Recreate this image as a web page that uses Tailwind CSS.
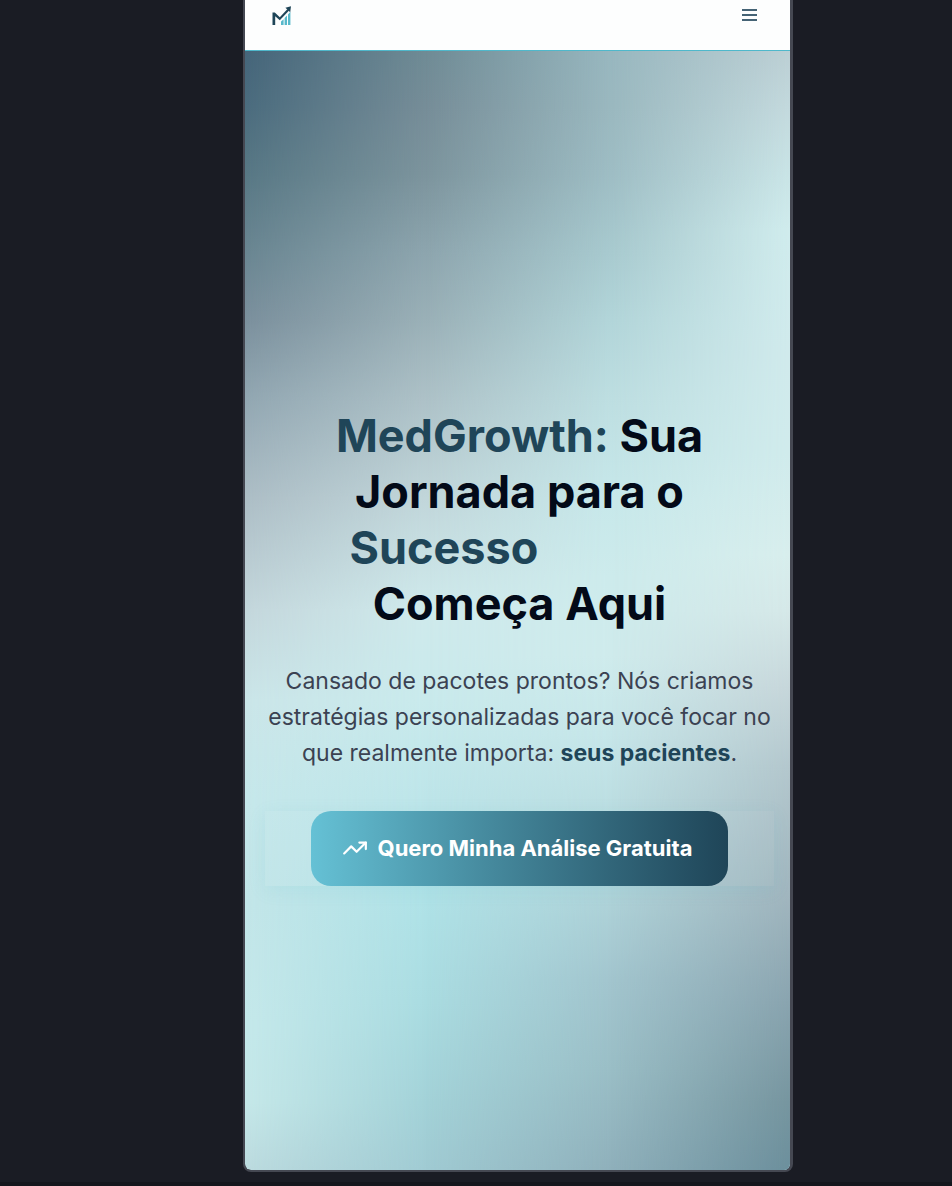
<!DOCTYPE html>
<html lang="pt-BR">
<head>
<meta charset="utf-8">
<meta name="viewport" content="width=device-width, initial-scale=1">
<title>MedGrowth</title>
<script src="https://cdn.jsdelivr.net/npm/@tailwindcss/browser@4"></script>
</head>
<body class="flex min-h-screen flex-col border-b-4 border-[#14161d] bg-[#1a1c24] pb-[10px] font-['Inter',sans-serif] sm:pl-[84px]">
  <div class="mx-auto flex w-full max-w-[550px] grow flex-col overflow-hidden rounded-b-lg border-r-3 border-b-2 border-l-2 border-[#454852] bg-[#454852]">
    <header class="flex h-[51px] items-start justify-between border-b border-[#4fb8cb] bg-[#fdfefe] pr-8 pl-[26px]">
      <a href="#" aria-label="MedGrowth" class="mt-[5px] block">
        <svg class="size-[22px]" viewBox="0 0 22 22" fill="none" aria-hidden="true">
          <path d="M10 20v-3.500l2.600-2.300V20zM13.600 20v-7l2.400-2.400V20zM17 20V9.500l2.400-2.800V20z" fill="#58b9cb"/>
          <path d="M1.500 20V7.500h2.300l5 4.800L16.500 4l1.600 1.600L8.800 15.300 4.200 11.200V20z" fill="#1f4558"/>
          <path d="M14.400 2.800l5.600-1.600L19.200 7.200z" fill="#1f4558"/>
        </svg>
      </a>
      <button type="button" aria-label="Abrir menu" class="mt-[5px] text-[#456375]">
        <svg class="h-5 w-[17px]" viewBox="0 0 17 20" fill="none" stroke="currentColor" stroke-width="2" aria-hidden="true"><path d="M1 5h15M1 10h15M1 15h15"/></svg>
      </button>
    </header>
    <main class="relative isolate flex grow flex-col items-center justify-center pt-[72px] pr-4 pl-5 text-center">
      <!-- Mesh gradient: four vertical ramps blended from left to right -->
      <div class="absolute inset-0 -z-10 overflow-hidden rounded-b-md bg-[linear-gradient(#45657a,#4b6c7e_5%,#587885_11%,#6a8692_18%,#7b909d_24%,#92a7b2_31%,#adbec6_40%,#c4d7dc_50%,#cbe6e9_58%,#c6e8eb_67%,#c3e6e9_76%,#c5e9eb_87%,#c5e8e9_94%,#bcdbdf)]" aria-hidden="true">
        <div class="absolute inset-0 bg-[linear-gradient(#6f8b95,#768d98_5%,#7c949d_11%,#8da5ae_18%,#9ab0b7_24%,#adc1c7_31%,#c1d6da_40%,#cfeaec_50%,#c9eaec_58%,#bde5e9_67%,#afe2e7_76%,#aadce1_85%,#a3d2d8_94%,#a0cbd3)] [mask-image:linear-gradient(to_right,transparent,black_33%)]"></div>
        <div class="absolute inset-0 bg-[linear-gradient(#98b7bf,#9ab8bf_5%,#9ebdc4_11%,#a8cacf_18%,#b2d5d9_24%,#bddee1_31%,#c7e8ea_40%,#cdebec_47%,#cfebec_54%,#c6e6e9_61%,#bbdde1_68%,#aed2d8_76%,#a2c5ce_83%,#9abec6_91%,#8fb0bb)] [mask-image:linear-gradient(to_right,transparent_33%,black_67%)]"></div>
        <div class="absolute inset-0 bg-[linear-gradient(#bccfd4,#c3d9dd_5%,#c9e4e6_11%,#d0eced_16%,#d0eaec_27%,#d0ebec_36%,#d8eeed_45%,#d5e8e8_50%,#c6d6da_57%,#b3c7cd_64%,#9fb4bd_76%,#89a4af_85%,#76959f_94%,#6c8f9c)] [mask-image:linear-gradient(to_right,transparent_67%,black)]"></div>
      </div>
      <h1 class="text-[45px] leading-[56px] font-bold text-[#030a18]">
        <span class="text-[#1f4558]">MedGrowth:</span> Sua<br>Jornada para o<br>
        <span class="inline-block w-[340px] text-left align-top text-[#1f4558]">Sucesso</span><br>Começa Aqui
      </h1>
      <p class="mt-[31px] text-[23px] leading-9 text-[#3b4252]">Cansado de pacotes prontos? Nós criamos<br>estratégias personalizadas para você focar no<br>que realmente importa: <strong class="font-bold text-[#1f4558]">seus pacientes</strong>.</p>
      <div class="mt-10 flex w-full justify-center bg-white/3 shadow-[0_4px_16px_#58b9cb20]">
        <button type="button" class="flex h-[75px] items-center gap-[10px] rounded-[20px] bg-linear-to-r from-[#65c1d5] to-[#1f4558] pr-9 pl-[31px] text-[22px] font-bold whitespace-nowrap text-white">
          <svg class="size-[26px]" viewBox="0 0 24 24" fill="none" stroke="currentColor" stroke-width="2" stroke-linecap="round" stroke-linejoin="round" aria-hidden="true"><path d="M22 7 13.500 15.500 8.500 10.500 2 17"/><path d="M16 7h6v6"/></svg>
          Quero Minha Análise Gratuita
        </button>
      </div>
    </main>
  </div>
</body>
</html>
